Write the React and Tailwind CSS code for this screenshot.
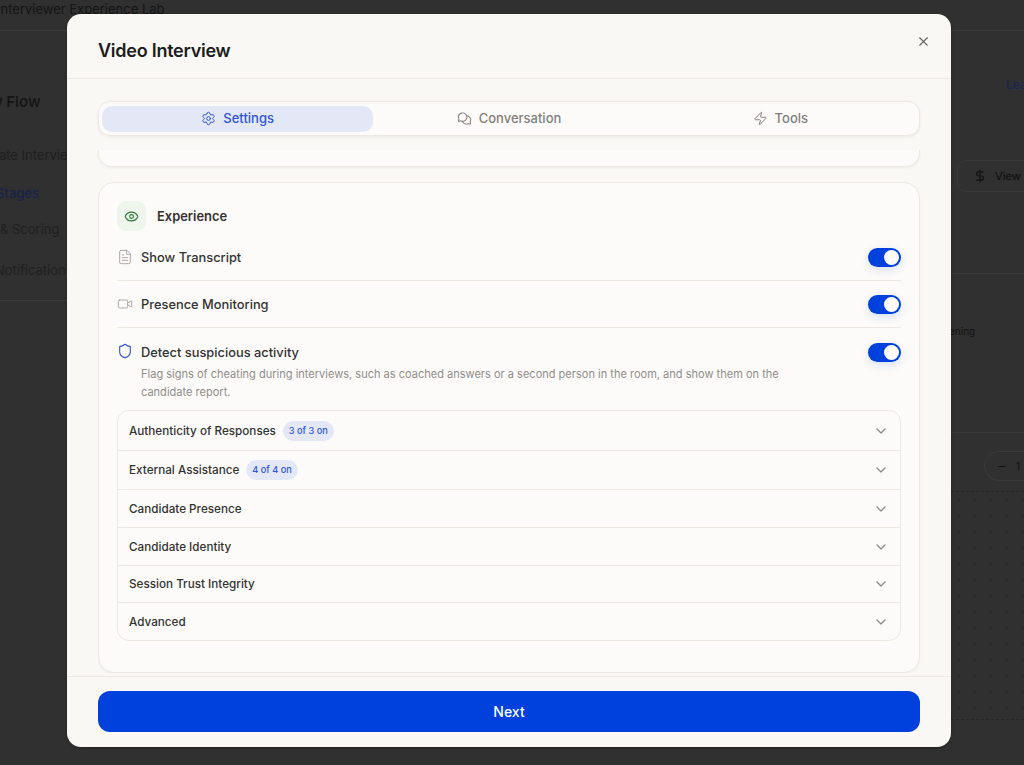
import React from 'react';
import { Settings, Zap, FileText, Video, Shield, Eye, ChevronDown, X, DollarSign, Minus } from 'lucide-react';
import { PiChatsCircle } from 'react-icons/pi';

function Toggle() {
  return (
    <div className="w-[33px] h-[19px] rounded-full bg-[#0040dc] flex items-center justify-end pr-[2px] shrink-0 shadow-[0_3px_8px_rgba(0,64,220,0.14)]">
      <div className="w-[15px] h-[15px] rounded-full bg-white" />
    </div>
  );
}

function Tab({ icon: Icon, label, active }) {
  return (
    <div className={`flex-1 h-[26px] rounded-[10px] flex items-center justify-center gap-[7px] text-[13px] font-medium ${active ? 'bg-[#e4e8f6] text-[#2f55d4]' : 'text-[#84807c]'}`}>
      <Icon className="w-[15px] h-[15px]" strokeWidth={1.6} />
      <span>{label}</span>
    </div>
  );
}

function Badge({ children }) {
  return <span className="ml-[7px] h-[20px] px-[6px] rounded-full bg-[#e4e8f6] text-[#2f55d4] text-[9.2px] font-medium flex items-center">{children}</span>;
}

const sections = [
  { label: 'Authenticity of Responses', badge: '3 of 3 on', h: 'h-[40px]' },
  { label: 'External Assistance', badge: '4 of 4 on', h: 'h-[39px]' },
  { label: 'Candidate Presence', h: 'h-[38px]' },
  { label: 'Candidate Identity', h: 'h-[38px]' },
  { label: 'Session Trust Integrity', h: 'h-[37px]' },
  { label: 'Advanced', h: 'h-[37px]' },
];

function Background() {
  return (
    <div className="h-[765px] overflow-hidden flex flex-col text-[#111]">
      <div className="h-[31px] shrink-0 border-b border-[#3a3a3a] flex items-center -ml-[3px] pb-[11px] text-[13px] text-[#141414]">Interviewer Experience Lab</div>
      <div className="flex-1 flex justify-between">
        <div className="w-[67px] overflow-hidden">
          <div className="w-[200px] h-[270px] border-b border-[#3a3a3a] flex flex-col">
            <div className="mt-[60px] -ml-[65px] text-[15px] font-semibold text-[#161616] whitespace-nowrap">Interview Flow</div>
            <div className="mt-[32px] -ml-[23px] text-[13px] text-[#1f1f1f] whitespace-nowrap">Create Interview</div>
            <div className="mt-[18.5px] -ml-[4px] text-[13px] font-medium text-[#18224a] whitespace-nowrap">Stages</div>
            <div className="mt-[16.5px] text-[13px] text-[#1f1f1f] whitespace-nowrap">&amp; Scoring</div>
            <div className="mt-[21.5px] -ml-[5px] text-[13px] text-[#1f1f1f] whitespace-nowrap">Notifications</div>
          </div>
        </div>
        <div className="w-[73px] overflow-hidden flex flex-col">
          <div className="mt-[45px] pl-[55px] text-[12px] font-medium text-[#1c2550] whitespace-nowrap">Learn</div>
          <div className="mt-[66px] ml-[6px] w-[90px] h-[32px] rounded-[10px] border border-[#3a3a3a] flex items-center gap-[8px] px-[15px] text-[11px] font-medium whitespace-nowrap shrink-0">
            <DollarSign className="w-[14px] h-[14px]" />View
          </div>
          <div className="mt-[81px] h-[160px] border-y border-[#3a3a3a] text-[10px] whitespace-nowrap pt-[50px] shrink-0 -ml-[2px]">ening</div>
          <div className="mt-[18px] ml-[33px] w-[70px] h-[30px] rounded-full border border-[#3a3a3a] flex items-center gap-[9px] pl-[11px] text-[10px] shrink-0">
            <Minus className="w-[11px] h-[11px]" />1
          </div>
          <div className="mt-[10px] h-[229px] border-y border-dashed border-[#262626] bg-[radial-gradient(#2b2b2b_1px,transparent_1px)] bg-[length:16px_16px] shrink-0" />
        </div>
      </div>
    </div>
  );
}

export default function App() {
  return (
    <div className="relative h-[765px] overflow-hidden bg-[#303030] font-['Inter',sans-serif]">
      <Background />
      <div className="absolute inset-0 flex items-start justify-start pl-[67px] pt-[14px]">
        <div className="w-[884px] h-[733px] rounded-[14px] bg-[#f9f8f5] flex flex-col overflow-hidden relative shadow-[0_1px_3px_rgba(0,0,0,0.3)]">
          <div className="h-[65px] shrink-0 border-b border-[#ece8e2] flex items-center pl-[31px] pt-[9px] relative">
            <h2 className="text-[18px] font-semibold text-[#1c1c1c] tracking-[-0.25px]">Video Interview</h2>
            <button className="absolute right-[20px] top-[20px] text-[#66625e]">
              <X className="w-[15px] h-[15px]" strokeWidth={1.7} />
            </button>
          </div>

          <div className="flex-1 flex flex-col overflow-hidden px-[31px]">
            <div className="mt-[22px] h-[35px] shrink-0 rounded-[12px] border border-[#ece8e2] bg-[#fcfbf9] flex items-center gap-0 px-[3px] shadow-[0_1px_3px_rgba(0,0,0,0.06)]">
              <Tab icon={Settings} label="Settings" active />
              <Tab icon={PiChatsCircle} label="Conversation" />
              <Tab icon={Zap} label="Tools" />
            </div>

            <div className="mt-[14px] h-[17px] shrink-0 rounded-b-[14px] border-b border-x border-[#ece8e2] bg-[#fcfbf9] shadow-[0_1px_3px_rgba(0,0,0,0.05)]" />

            <div className="mt-[15px] h-[491px] shrink-0 rounded-[16px] border border-[#ece8e2] bg-[#fcfbf9] px-[18px] pt-[18px] shadow-[0_1px_2px_rgba(0,0,0,0.04)]">
              <div className="flex items-center gap-[11px]">
                <div className="w-[29px] h-[30px] rounded-[9px] bg-[#edf5ec] flex items-center justify-center">
                  <Eye className="w-[15px] h-[15px] text-[#2f7a3a]" strokeWidth={1.8} />
                </div>
                <span className="text-[12.9px] font-semibold text-[#333230] pt-[1px]">Experience</span>
              </div>

              <div className="mt-[3px] h-[47px] border-b border-[#ece8e2] flex items-center justify-between pt-[1px]">
                <div className="flex items-center gap-[8px]">
                  <FileText className="w-[16px] h-[16px] text-[#a09c98]" strokeWidth={1.3} />
                  <span className="text-[12.85px] font-medium text-[#333230]">Show Transcript</span>
                </div>
                <Toggle />
              </div>
              <div className="h-[47px] border-b border-[#ece8e2] flex items-center justify-between pt-[1px]">
                <div className="flex items-center gap-[8px]">
                  <Video className="w-[16px] h-[16px] text-[#a09c98]" strokeWidth={1.3} />
                  <span className="text-[12.85px] font-medium text-[#333230]">Presence Monitoring</span>
                </div>
                <Toggle />
              </div>

              <div className="pt-[15px] flex items-start justify-between">
                <div className="flex items-start gap-[8px]">
                  <Shield className="w-[16px] h-[16px] text-[#2f55d4]" strokeWidth={1.7} />
                  <div>
                    <div className="pt-[1px] text-[12.85px] font-medium text-[#333230] leading-[18px]">Detect suspicious activity</div>
                    <p className="mt-[3px] w-[660px] text-[11.04px] leading-[18px] text-[#918d89]">
                      Flag signs of cheating during interviews, such as coached answers or a second person in the room, and show them on the candidate report.
                    </p>
                  </div>
                </div>
                <Toggle />
              </div>

              <div className="mt-[9px] rounded-[12px] border border-[#ece8e2] overflow-hidden divide-y divide-[#ece8e2]">
                {sections.map((s) => (
                  <div key={s.label} className={`${s.h} flex items-center justify-between pl-[11px] pr-[11px]`}>
                    <div className="flex items-center text-[11.7px] font-medium text-[#333230]">
                      <span className="pt-[2px]">{s.label}</span>
                      {s.badge && <Badge>{s.badge}</Badge>}
                    </div>
                    <ChevronDown className="w-[16px] h-[16px] text-[#8d8986]" strokeWidth={1.9} />
                  </div>
                ))}
              </div>
            </div>
          </div>

          <div className="mt-[3px] h-[71px] shrink-0 border-t border-[#ece8e2] px-[31px] pt-[14px]">
            <button className="w-full h-[41px] rounded-[12px] bg-[#0040dc] text-white text-[14px] font-medium">Next</button>
          </div>
        </div>
      </div>
    </div>
  );
}
